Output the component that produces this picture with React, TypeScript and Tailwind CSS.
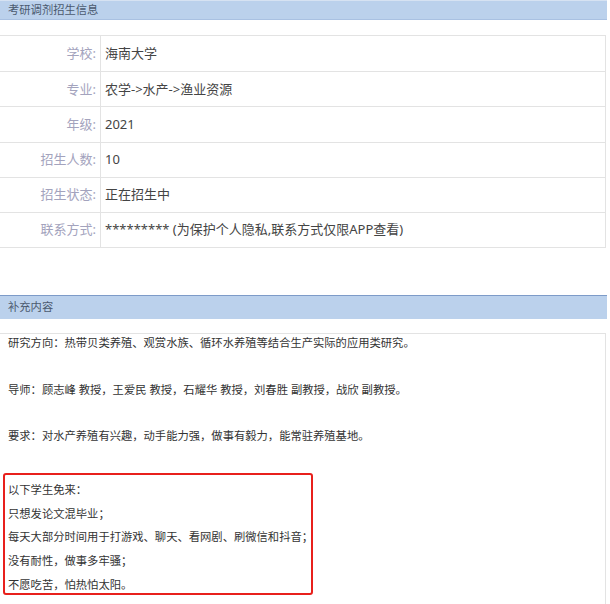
import React from "react";

const rows: [string, string][] = [
  ["学校:", "海南大学"],
  ["专业:", "农学->水产->渔业资源"],
  ["年级:", "2021"],
  ["招生人数:", "10"],
  ["招生状态:", "正在招生中"],
  ["联系方式:", "********* (为保护个人隐私,联系方式仅限APP查看)"],
];

const redLines = [
  "以下学生免来：",
  "只想发论文混毕业；",
  "每天大部分时间用于打游戏、聊天、看网剧、刷微信和抖音；",
  "没有耐性，做事多牢骚；",
  "不愿吃苦，怕热怕太阳。",
];

export default function App() {
  return (
    <div
      className="w-[610px] h-[604px] overflow-hidden bg-white"
      style={{ fontFamily: '"Noto Sans", "Noto Sans CJK SC", sans-serif' }}
    >
      <div className="w-[607px] h-[20px] bg-[#bbd1ec] border-t border-[#d6e2f2] border-b border-b-[#a9c1e2] flex items-center pl-2 text-[11.3px] text-[#4b5a6f]">
        考研调剂招生信息
      </div>
      <div className="h-[15px]" />
      <div className="w-[606px] border-t border-r border-b border-[#e3e3e3]">
        {rows.map(([k, v], i) => (
          <div
            key={k}
            className={`grid grid-cols-[101px_1fr] h-[35.2px] ${i > 0 ? "border-t border-[#e3e3e3]" : ""}`}
          >
            <div className="flex items-center justify-end pr-[4px] border-r border-[#e3e3e3] text-[13px] text-[#a3a3bd]">
              {k}
            </div>
            <div className="flex items-center pl-[4px] text-[13px] text-[#444]">{v}</div>
          </div>
        ))}
      </div>
      <div className="h-[47px]" />
      <div className="w-[607px] h-[24px] bg-[#bbd1ec] border-t border-[#7d9bc8] flex items-center pl-2 text-[11.3px] text-[#4b5a6f]">
        补充内容
      </div>
      <div className="h-[14px]" />
      <div className="w-[606px] h-[300px] border-t border-r border-[#e3e3e3] text-[11.3px] text-[#333]">
        <div className="pl-2 leading-[18px]">研究方向：热带贝类养殖、观赏水族、循环水养殖等结合生产实际的应用类研究。</div>
        <div className="pl-2 leading-[18px] mt-[28.5px]">导师：顾志峰 教授，王爱民 教授，石耀华 教授，刘春胜 副教授，战欣 副教授。</div>
        <div className="pl-2 leading-[18px] mt-[28.5px]">要求：对水产养殖有兴趣，动手能力强，做事有毅力，能常驻养殖基地。</div>
        <div className="ml-[3px] mt-[28px] w-[310px] h-[122px] border-2 border-[#e8201c] rounded-[3px] pl-[3px] pt-[3px]">
          {redLines.map((l) => (
            <div key={l} className="leading-[23.6px] whitespace-nowrap">
              {l}
            </div>
          ))}
        </div>
      </div>
    </div>
  );
}
